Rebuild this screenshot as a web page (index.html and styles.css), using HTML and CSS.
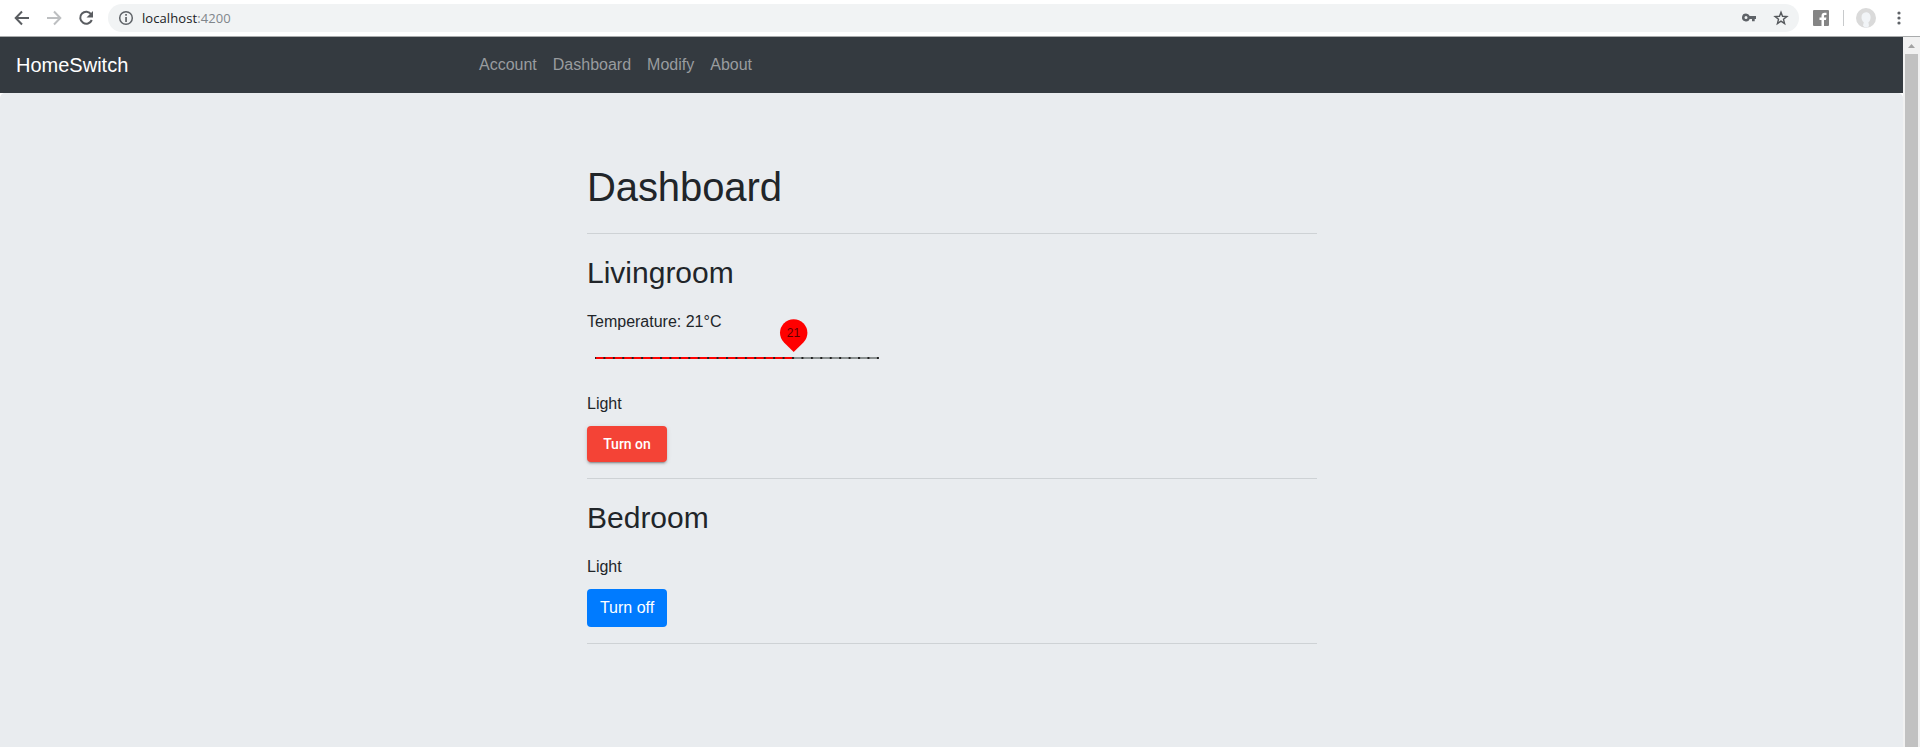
FILE: index.html
```html
<!DOCTYPE html>
<html lang="en">
<head>
<meta charset="utf-8">
<title>HomeSwitch</title>
<link rel="stylesheet" href="styles.css">
</head>
<body>
<header class="toolbar">
  <svg class="tool-icons" width="108" height="36" viewBox="0 0 108 36" fill="none" stroke-width="2">
    <path d="M29 18H16M22 11.5 15.7 18 22 24.500" stroke="#5a5d61"/>
    <path d="M47 18h13M54 11.500 60.300 18 54 24.500" stroke="#bdbfc1"/>
    <path d="M91.200 14.300A6 6 0 1 0 91.800 20" stroke="#5a5d61"/>
    <path d="M93 11v6.500h-6.500z" fill="#5a5d61"/>
  </svg>
  <div class="address">
    <svg width="16" height="16" viewBox="0 0 16 16"><circle cx="8" cy="8" r="6.300" fill="none" stroke="#5f6368" stroke-width="1.500"/><path d="M7.200 7h1.700v5H7.200zM7.200 4h1.700v1.700H7.200z" fill="#5f6368"/></svg>
    <span class="url">localhost<span class="port">:4200</span></span>
    <svg class="key" width="16" height="16" viewBox="0 0 16 16"><path fill="#5f6368" fill-rule="evenodd" d="M5 3.500a4 4 0 1 0 3.700 5.500H11v2.300h2.700V9H15V6H8.700A4 4 0 0 0 5 3.500zm0 2.500a1.500 1.500 0 1 1 0 3 1.500 1.500 0 0 1 0-3z"/></svg>
    <svg class="star" width="16" height="16" viewBox="0 0 16 16"><path fill="none" stroke="#55585c" stroke-width="1.400" d="m8 2.300 1.500 4 4.400.2-3.400 2.800 1.100 4.300L8 11.200l-3.600 2.400 1.100-4.300L2.100 6.500l4.400-.2z"/></svg>
  </div>
  <svg class="fb" width="16" height="16" viewBox="0 0 16 16"><rect width="16" height="16" rx="1" fill="#858585"/><path d="M8.500 16V10H6.500V7.500h2V6c0-2.200 1.200-3.300 3-3.300h2V5h-1.400c-.8 0-1.100.4-1.100 1.200v1.300h2.400L13 10h-2v6z" fill="#fff"/></svg>
  <span class="divider"></span>
  <svg class="avatar" width="20" height="20" viewBox="0 0 20 20"><circle cx="10" cy="10" r="10" fill="#dadada"/><path d="M10 4.300c-3 0-4.500 2.200-4.500 5 0 2.300 1 4.200 2.300 5l-.8 3.500 2 1.700h3l1-2-.6-3.200c1.400-.9 2.200-2.800 2.200-5 0-2.800-1.600-5-4.600-5z" fill="#f1f4f7"/></svg>
  <svg class="menu" width="4" height="14" viewBox="0 0 4 14" fill="#5f6368"><circle cx="2" cy="2" r="1.600"/><circle cx="2" cy="7" r="1.600"/><circle cx="2" cy="12" r="1.600"/></svg>
</header>
<div class="viewport">
  <div class="page">
    <nav class="navbar">
      <a class="brand">HomeSwitch</a>
      <a class="nav-link">Account</a>
      <a class="nav-link">Dashboard</a>
      <a class="nav-link">Modify</a>
      <a class="nav-link">About</a>
    </nav>
    <main class="jumbotron">
      <div class="content">
        <h1>Dashboard</h1>
        <hr>
        <h2>Livingroom</h2>
        <p class="label">Temperature: 21°C</p>
        <div class="slider">
          <svg width="284" height="46" viewBox="0 0 284 46">
            <defs><pattern id="ticks" x="-1" y="0" width="9.430" height="2" patternUnits="userSpaceOnUse"><rect width="2" height="2" fill="#222"/></pattern></defs>
            <path d="M0 40h284v2H0z" fill="#8b9191"/>
            <path d="M0 40h199v2H0z" fill="#f00"/>
            <path d="M0 40h284v2H0z" fill="url(#ticks)"/>
            <path d="M198.700 35 189 25.500a13.700 13.700 0 1 1 19.400 0z" fill="#f00"/>
            <text class="thumb-value" x="198.500" y="20" text-anchor="middle">21</text>
          </svg>
        </div>
        <p class="label">Light</p>
        <button class="btn btn-warn">Turn on</button>
        <hr>
        <h2>Bedroom</h2>
        <p class="label">Light</p>
        <button class="btn btn-primary">Turn off</button>
        <hr>
      </div>
    </main>
  </div>
  <div class="scrollbar">
    <svg width="17" height="17" viewBox="0 0 17 17"><path d="M5 11h7L8.500 7z" fill="#a3a3a3"/></svg>
    <div class="scroll-thumb"></div>
  </div>
</div>
</body>
</html>
```
FILE: styles.css
```css
* { box-sizing: border-box; }
body {
  margin: 0;
  height: 747px;
  overflow: hidden;
  display: flex;
  flex-direction: column;
  background: #fff;
  color: #212529;
  font: 16px/1.5 "Liberation Sans", Arial, sans-serif;
}
.toolbar {
  height: 37px;
  flex: none;
  display: flex;
  align-items: center;
  border-bottom: 1px solid #a9abac;
}
.toolbar svg { flex: none; }
.address {
  width: 1691px;
  height: 28px;
  padding: 0 10px;
  border-radius: 14px;
  background: #f1f3f4;
  display: flex;
  align-items: center;
}
.url {
  margin-left: 8px;
  color: #202124;
  font: 13px/28px "Open Sans", sans-serif;
  letter-spacing: 0.08px;
}
.port { color: #80868b; }
.key { margin-left: auto; }
.star { margin-left: 16px; }
.fb { margin-left: 14px; }
.divider { width: 1px; height: 16px; margin: 0 12px 0 14px; background: #c8cacc; }
.menu { margin-left: 21px; }
.viewport { flex: 1; min-height: 0; display: flex; }
.page { width: 1903px; display: flex; flex-direction: column; }
.navbar {
  height: 56px;
  flex: none;
  padding-left: 16px;
  display: flex;
  align-items: center;
  gap: 16px;
  background: #343a40;
}
.brand { width: 447px; color: #fff; font-size: 20px; }
.nav-link { color: #999c9f; }
.jumbotron {
  flex: 1;
  padding-top: 64px;
  border-radius: 5px 5px 0 0;
  background: #e9ecef;
}
.content { width: 730px; margin-left: 587px; }
h1, h2 { margin: 0; font-weight: 400; line-height: 1.5; }
h1 { font-size: 40px; letter-spacing: -0.1px; }
h2 { font-size: 30px; margin-bottom: 15px; }
hr { margin: 16px 0; border: 0; border-top: 1px solid #ced2d5; }
.label { margin: 0 0 10px; }
.slider { height: 75px; margin-top: -27px; padding-left: 8px; }
.slider svg { display: block; }
.thumb-value { font-size: 12px; fill: #5c0000; }
.btn {
  display: block;
  width: 80px;
  border: 0;
  padding: 0;
  border-radius: 4px;
  color: #fff;
  font-family: inherit;
}
.btn-warn {
  height: 36px;
  background: #f44336;
  font: 500 14px/36px Roboto, sans-serif;
  box-shadow: 0 3px 1px -2px rgba(0,0,0,.2), 0 2px 2px rgba(0,0,0,.14), 0 1px 5px rgba(0,0,0,.12);
}
.btn-primary { height: 38px; background: #007bff; font-size: 16px; }
.scrollbar {
  width: 17px;
  display: flex;
  flex-direction: column;
  align-items: center;
  background: #f1f1f1;
}
.scroll-thumb { flex: 1; width: 13px; background: #c1c1c1; }
```
